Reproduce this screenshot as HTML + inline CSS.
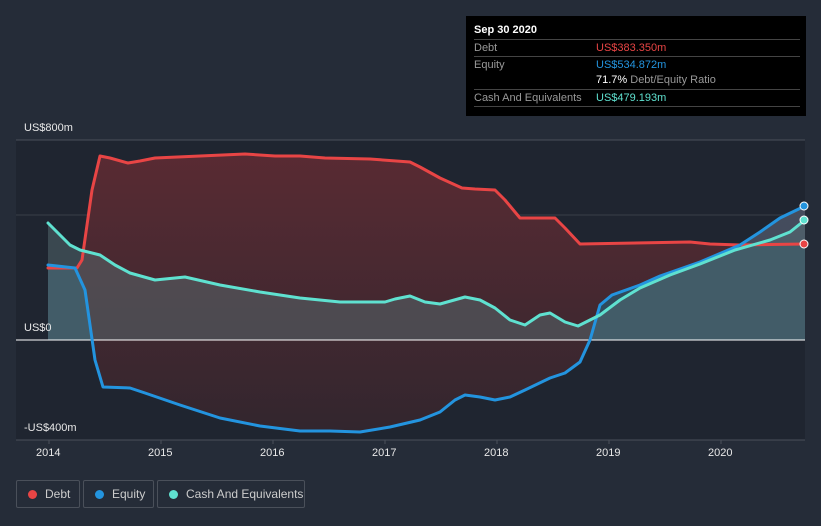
<!DOCTYPE html>
<html><head><meta charset="utf-8"><style>
body{margin:0;width:821px;height:526px;background:#252c38;font-family:"Liberation Sans",sans-serif;overflow:hidden;position:relative}
.t{position:absolute;color:#e8e8e8;font-size:11px}
.tip{position:absolute;left:466px;top:16px;width:340px;height:100px;background:#000}
.row{position:absolute;left:8px;width:326px;font-size:11px;color:#999;border-top:1px solid #444;height:16px;line-height:16px}
.leg{position:absolute;top:480px;height:26px;border:1px solid #4a505a;border-radius:2px;color:#ccc;font-size:12px;line-height:26px}
.dot{position:absolute;top:9px;width:9px;height:9px;border-radius:50%}
</style></head><body>
<svg width="821" height="526" style="position:absolute;left:0;top:0">
<defs>
<linearGradient id="rg" x1="0" y1="0" x2="0" y2="1"><stop offset="0" stop-color="#5c2b33"/><stop offset="1" stop-color="#33262e"/></linearGradient>
</defs>
<rect x="16" y="140" width="789" height="300" fill="#1f2530"/>
<line x1="16" y1="140" x2="805" y2="140" stroke="#4a505a"/>
<line x1="16" y1="215" x2="805" y2="215" stroke="#3a3f48"/>
<line x1="16" y1="440" x2="805" y2="440" stroke="#4a505a"/>
<g stroke="#4a505a"><line x1="49" y1="440" x2="49" y2="444"/><line x1="161" y1="440" x2="161" y2="444"/><line x1="273" y1="440" x2="273" y2="444"/><line x1="385" y1="440" x2="385" y2="444"/><line x1="497" y1="440" x2="497" y2="444"/><line x1="609" y1="440" x2="609" y2="444"/><line x1="721" y1="440" x2="721" y2="444"/></g>
<polygon fill="url(#rg)" opacity="0.95" points="48,268 77,268 82,260 92,190 100,156 110,158 128,163 140,161 155,158 200,156 245,154 275,156 300,156 325,158 370,159 410,162 420,167 440,178 462,188 475,189 495,190 505,200 520,218 555,218 565,228 580,244 690,242 710,244 740,245 805,244 805,206 780,218 760,232 740,245 700,262 660,276 640,285 612,295 600,305 590,340 580,362 565,373 550,378 525,390 510,397 495,400 480,397 465,395 455,400 440,412 420,420 390,427 360,432 330,431 300,431 260,426 220,418 180,405 145,393 130,388 103,387 95,360 85,290 75,268 48,265"/>
<polygon fill="#3d6a82" opacity="0.55" points="48,265 75,268 85,290 92,340 590,340 600,305 612,295 640,285 660,276 700,262 740,245 760,232 780,218 805,206 805,340 48,340"/>
<polygon fill="#5a7478" opacity="0.45" points="48,223 70,245 80,250 100,255 115,265 130,273 155,280 185,277 220,285 260,292 300,298 340,302 385,302 395,299 410,296 425,302 440,304 465,297 480,300 495,308 510,320 525,325 540,315 550,313 565,322 578,326 600,315 620,300 640,288 670,275 700,264 735,250 770,240 790,232 805,220 805,340 48,340"/>
<line x1="16" y1="340" x2="805" y2="340" stroke="#ffffff" stroke-width="1"/>
<g fill="none" stroke-width="3" stroke-linejoin="round" stroke-linecap="round">
<polyline stroke="#e84545" points="48,268 77,268 82,260 92,190 100,156 110,158 128,163 140,161 155,158 200,156 245,154 275,156 300,156 325,158 370,159 410,162 420,167 440,178 462,188 475,189 495,190 505,200 520,218 555,218 565,228 580,244 690,242 710,244 740,245 805,244"/>
<polyline stroke="#2394df" points="48,265 75,268 85,290 95,360 103,387 130,388 145,393 180,405 220,418 260,426 300,431 330,431 360,432 390,427 420,420 440,412 455,400 465,395 480,397 495,400 510,397 525,390 550,378 565,373 580,362 590,340 600,305 612,295 640,285 660,276 700,262 740,245 760,232 780,218 805,206"/>
<polyline stroke="#5fe1d0" points="48,223 70,245 80,250 100,255 115,265 130,273 155,280 185,277 220,285 260,292 300,298 340,302 385,302 395,299 410,296 425,302 440,304 465,297 480,300 495,308 510,320 525,325 540,315 550,313 565,322 578,326 600,315 620,300 640,288 670,275 700,264 735,250 770,240 790,232 805,220"/>
</g>
<circle cx="804" cy="244" r="4" fill="#e84545" stroke="#fff" stroke-width="1"/>
<circle cx="804" cy="206" r="4" fill="#2394df" stroke="#fff" stroke-width="1"/>
<circle cx="804" cy="220" r="4" fill="#5fe1d0" stroke="#fff" stroke-width="1"/>
</svg>
<div class="t" style="left:24px;top:122px">US$800m</div>
<div class="t" style="left:24px;top:322px">US$0</div>
<div class="t" style="left:24px;top:422px">-US$400m</div>
<div class="t" style="left:36px;top:447px">2014</div>
<div class="t" style="left:148px;top:447px">2015</div>
<div class="t" style="left:260px;top:447px">2016</div>
<div class="t" style="left:372px;top:447px">2017</div>
<div class="t" style="left:484px;top:447px">2018</div>
<div class="t" style="left:596px;top:447px">2019</div>
<div class="t" style="left:708px;top:447px">2020</div>
<div class="tip">
<div style="position:absolute;left:8px;top:8px;color:#fff;font-weight:bold;font-size:11px">Sep 30 2020</div>
<div class="row" style="top:23px">Debt<span style="position:absolute;left:122px;color:#e84545">US$383.350m</span></div>
<div class="row" style="top:40px">Equity<span style="position:absolute;left:122px;color:#2394df">US$534.872m</span></div>
<div class="row" style="top:56px;border-top:none"><span style="position:absolute;left:122px;color:#fff">71.7% <span style="color:#999">Debt/Equity Ratio</span></span></div>
<div class="row" style="top:73px;border-bottom:1px solid #444">Cash And Equivalents<span style="position:absolute;left:122px;color:#5fe1d0">US$479.193m</span></div>
</div>
<div class="leg" style="left:16px;width:62px"><span class="dot" style="left:11px;background:#e84545"></span><span style="position:absolute;left:28px">Debt</span></div>
<div class="leg" style="left:83px;width:69px"><span class="dot" style="left:11px;background:#2394df"></span><span style="position:absolute;left:28px">Equity</span></div>
<div class="leg" style="left:157px;width:146px"><span class="dot" style="left:11px;background:#5fe1d0"></span><span style="position:absolute;left:28px">Cash And Equivalents</span></div>
</body></html>
